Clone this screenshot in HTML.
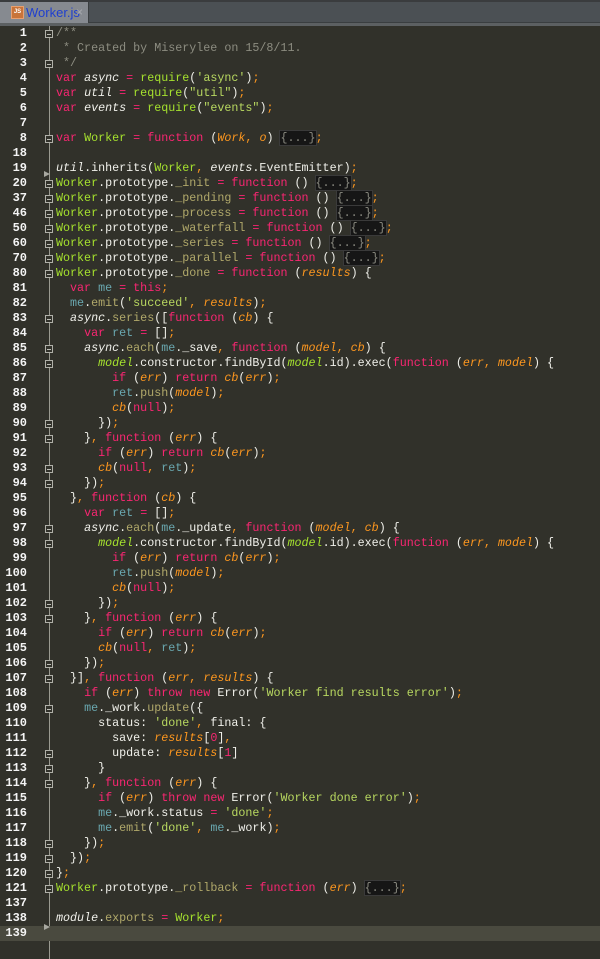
<!DOCTYPE html>
<html><head><meta charset="utf-8"><style>
html,body{margin:0;padding:0;width:600px;height:959px;overflow:hidden;background:#31312a;}
#bar{position:absolute;left:0;top:0;width:600px;height:26px;background:#4b5054;}
#bar .t1{position:absolute;left:0;top:0;width:600px;height:2px;background:#3a3c3e}
#bar .t2{position:absolute;left:0;top:22px;width:600px;height:1px;background:#3a3e40}
#bar .t3{position:absolute;left:0;top:23px;width:600px;height:3px;background:#5c6062}
#tab{position:absolute;left:0;top:2px;width:88px;height:21px;background:#868a90;border-right:1px solid #3a3e40}
#tab .ic{position:absolute;left:11px;top:4px;width:11px;height:11px;background:#c8743a;border:1px solid #e8a070;font:bold 6px "Liberation Sans",sans-serif;color:#fff;line-height:11px;text-align:center}
#tab .nm{position:absolute;left:26px;top:3px;font:13px "Liberation Sans",sans-serif;color:#1f3fcf}
#tab .x{position:absolute;left:76px;top:3px;font:12px "Liberation Sans",sans-serif;color:#a8aaae}
#code{position:absolute;left:0;top:26px;width:600px;}
.r{position:relative;height:15px;line-height:15px;font:11.7px/15px "Liberation Mono",monospace;color:#f0f0ea;white-space:pre;}
.n{position:absolute;left:0;width:27px;text-align:right;color:#f4f4f4;font-weight:bold;font-size:12px;}
.c0{position:absolute;left:56px;}
.cur{background:#4a4a3f;}
#vl{position:absolute;left:49px;top:26px;width:1px;height:933px;background:#9a9a90}
.fm{position:absolute;left:45px;width:8px;height:8px;border:1px solid #b0b0a8;background:#31312a;box-sizing:border-box;}
.fm:after{content:"";position:absolute;left:1px;top:2.5px;width:4px;height:1px;background:#c0c0b8}
.ar{position:absolute;left:44px;width:0;height:0;border-left:6px solid #a8a8a0;border-top:3px solid transparent;border-bottom:3px solid transparent}
.k{color:#f92672}.g{color:#a6e22e}.o{color:#fd971f}.oi{color:#fd971f;font-style:italic}
.t{color:#6aa8b0}.p{color:#b0a86a}.i{font-style:italic}.s{color:#b8d860}.c{color:#8c8c80}
.f{background:#161616;color:#8a8a80;outline:1px solid #3a3a3a}
</style></head><body>
<div id="bar"><div class="t1"></div><div class="t2"></div><div class="t3"></div>
<div id="tab"><div class="ic">JS</div><div class="nm">Worker.js</div><div class="x">×</div></div></div>
<div id="vl"></div>
<div id="code">
<div class="r"><span class="n">1</span><span class="c0 c">/**</span></div>
<div class="r"><span class="n">2</span><span class="c0 c"> * Created by Miserylee on 15/8/11.</span></div>
<div class="r"><span class="n">3</span><span class="c0 c"> */</span></div>
<div class="r"><span class="n">4</span><span class="c0"><span class="k">var</span> <span class="i">async</span> <span class="k">=</span> <span class="g">require</span>(<span class="s">'async'</span>)<span class="o">;</span></span></div>
<div class="r"><span class="n">5</span><span class="c0"><span class="k">var</span> <span class="i">util</span> <span class="k">=</span> <span class="g">require</span>(<span class="s">"util"</span>)<span class="o">;</span></span></div>
<div class="r"><span class="n">6</span><span class="c0"><span class="k">var</span> <span class="i">events</span> <span class="k">=</span> <span class="g">require</span>(<span class="s">"events"</span>)<span class="o">;</span></span></div>
<div class="r"><span class="n">7</span></div>
<div class="r"><span class="n">8</span><span class="c0"><span class="k">var</span> <span class="g">Worker</span> <span class="k">=</span> <span class="k">function</span> (<span class="oi">Work</span><span class="o">,</span> <span class="oi">o</span>) <span class="f">{...}</span><span class="o">;</span></span></div>
<div class="r"><span class="n">18</span></div>
<div class="r"><span class="n">19</span><span class="c0"><span class="i">util</span>.inherits(<span class="g">Worker</span><span class="o">,</span> <span class="i">events</span>.EventEmitter)<span class="o">;</span></span></div>
<div class="r"><span class="n">20</span><span class="c0"><span class="g">Worker</span>.prototype.<span class="p">_init</span> <span class="k">=</span> <span class="k">function</span> () <span class="f">{...}</span><span class="o">;</span></span></div>
<div class="r"><span class="n">37</span><span class="c0"><span class="g">Worker</span>.prototype.<span class="p">_pending</span> <span class="k">=</span> <span class="k">function</span> () <span class="f">{...}</span><span class="o">;</span></span></div>
<div class="r"><span class="n">46</span><span class="c0"><span class="g">Worker</span>.prototype.<span class="p">_process</span> <span class="k">=</span> <span class="k">function</span> () <span class="f">{...}</span><span class="o">;</span></span></div>
<div class="r"><span class="n">50</span><span class="c0"><span class="g">Worker</span>.prototype.<span class="p">_waterfall</span> <span class="k">=</span> <span class="k">function</span> () <span class="f">{...}</span><span class="o">;</span></span></div>
<div class="r"><span class="n">60</span><span class="c0"><span class="g">Worker</span>.prototype.<span class="p">_series</span> <span class="k">=</span> <span class="k">function</span> () <span class="f">{...}</span><span class="o">;</span></span></div>
<div class="r"><span class="n">70</span><span class="c0"><span class="g">Worker</span>.prototype.<span class="p">_parallel</span> <span class="k">=</span> <span class="k">function</span> () <span class="f">{...}</span><span class="o">;</span></span></div>
<div class="r"><span class="n">80</span><span class="c0"><span class="g">Worker</span>.prototype.<span class="p">_done</span> <span class="k">=</span> <span class="k">function</span> (<span class="oi">results</span>) {</span></div>
<div class="r"><span class="n">81</span><span class="c0">  <span class="k">var</span> <span class="t">me</span> <span class="k">=</span> <span class="k">this</span><span class="o">;</span></span></div>
<div class="r"><span class="n">82</span><span class="c0">  <span class="t">me</span>.<span class="p">emit</span>(<span class="s">'succeed'</span><span class="o">,</span> <span class="oi">results</span>)<span class="o">;</span></span></div>
<div class="r"><span class="n">83</span><span class="c0">  <span class="i">async</span>.<span class="p">series</span>([<span class="k">function</span> (<span class="oi">cb</span>) {</span></div>
<div class="r"><span class="n">84</span><span class="c0">    <span class="k">var</span> <span class="t">ret</span> <span class="k">=</span> []<span class="o">;</span></span></div>
<div class="r"><span class="n">85</span><span class="c0">    <span class="i">async</span>.<span class="p">each</span>(<span class="t">me</span>._save<span class="o">,</span> <span class="k">function</span> (<span class="oi">model</span><span class="o">,</span> <span class="oi">cb</span>) {</span></div>
<div class="r"><span class="n">86</span><span class="c0">      <span class="g i">model</span>.constructor.findById(<span class="g i">model</span>.id).exec(<span class="k">function</span> (<span class="oi">err</span><span class="o">,</span> <span class="oi">model</span>) {</span></div>
<div class="r"><span class="n">87</span><span class="c0">        <span class="k">if</span> (<span class="oi">err</span>) <span class="k">return</span> <span class="oi">cb</span>(<span class="oi">err</span>)<span class="o">;</span></span></div>
<div class="r"><span class="n">88</span><span class="c0">        <span class="t">ret</span>.<span class="p">push</span>(<span class="oi">model</span>)<span class="o">;</span></span></div>
<div class="r"><span class="n">89</span><span class="c0">        <span class="oi">cb</span>(<span class="k">null</span>)<span class="o">;</span></span></div>
<div class="r"><span class="n">90</span><span class="c0">      })<span class="o">;</span></span></div>
<div class="r"><span class="n">91</span><span class="c0">    }<span class="o">,</span> <span class="k">function</span> (<span class="oi">err</span>) {</span></div>
<div class="r"><span class="n">92</span><span class="c0">      <span class="k">if</span> (<span class="oi">err</span>) <span class="k">return</span> <span class="oi">cb</span>(<span class="oi">err</span>)<span class="o">;</span></span></div>
<div class="r"><span class="n">93</span><span class="c0">      <span class="oi">cb</span>(<span class="k">null</span><span class="o">,</span> <span class="t">ret</span>)<span class="o">;</span></span></div>
<div class="r"><span class="n">94</span><span class="c0">    })<span class="o">;</span></span></div>
<div class="r"><span class="n">95</span><span class="c0">  }<span class="o">,</span> <span class="k">function</span> (<span class="oi">cb</span>) {</span></div>
<div class="r"><span class="n">96</span><span class="c0">    <span class="k">var</span> <span class="t">ret</span> <span class="k">=</span> []<span class="o">;</span></span></div>
<div class="r"><span class="n">97</span><span class="c0">    <span class="i">async</span>.<span class="p">each</span>(<span class="t">me</span>._update<span class="o">,</span> <span class="k">function</span> (<span class="oi">model</span><span class="o">,</span> <span class="oi">cb</span>) {</span></div>
<div class="r"><span class="n">98</span><span class="c0">      <span class="g i">model</span>.constructor.findById(<span class="g i">model</span>.id).exec(<span class="k">function</span> (<span class="oi">err</span><span class="o">,</span> <span class="oi">model</span>) {</span></div>
<div class="r"><span class="n">99</span><span class="c0">        <span class="k">if</span> (<span class="oi">err</span>) <span class="k">return</span> <span class="oi">cb</span>(<span class="oi">err</span>)<span class="o">;</span></span></div>
<div class="r"><span class="n">100</span><span class="c0">        <span class="t">ret</span>.<span class="p">push</span>(<span class="oi">model</span>)<span class="o">;</span></span></div>
<div class="r"><span class="n">101</span><span class="c0">        <span class="oi">cb</span>(<span class="k">null</span>)<span class="o">;</span></span></div>
<div class="r"><span class="n">102</span><span class="c0">      })<span class="o">;</span></span></div>
<div class="r"><span class="n">103</span><span class="c0">    }<span class="o">,</span> <span class="k">function</span> (<span class="oi">err</span>) {</span></div>
<div class="r"><span class="n">104</span><span class="c0">      <span class="k">if</span> (<span class="oi">err</span>) <span class="k">return</span> <span class="oi">cb</span>(<span class="oi">err</span>)<span class="o">;</span></span></div>
<div class="r"><span class="n">105</span><span class="c0">      <span class="oi">cb</span>(<span class="k">null</span><span class="o">,</span> <span class="t">ret</span>)<span class="o">;</span></span></div>
<div class="r"><span class="n">106</span><span class="c0">    })<span class="o">;</span></span></div>
<div class="r"><span class="n">107</span><span class="c0">  }]<span class="o">,</span> <span class="k">function</span> (<span class="oi">err</span><span class="o">,</span> <span class="oi">results</span>) {</span></div>
<div class="r"><span class="n">108</span><span class="c0">    <span class="k">if</span> (<span class="oi">err</span>) <span class="k">throw new</span> Error(<span class="s">'Worker find results error'</span>)<span class="o">;</span></span></div>
<div class="r"><span class="n">109</span><span class="c0">    <span class="t">me</span>._work.<span class="p">update</span>({</span></div>
<div class="r"><span class="n">110</span><span class="c0">      status: <span class="s">'done'</span><span class="o">,</span> final: {</span></div>
<div class="r"><span class="n">111</span><span class="c0">        save: <span class="oi">results</span>[<span class="k">0</span>]<span class="o">,</span></span></div>
<div class="r"><span class="n">112</span><span class="c0">        update: <span class="oi">results</span>[<span class="k">1</span>]</span></div>
<div class="r"><span class="n">113</span><span class="c0">      }</span></div>
<div class="r"><span class="n">114</span><span class="c0">    }<span class="o">,</span> <span class="k">function</span> (<span class="oi">err</span>) {</span></div>
<div class="r"><span class="n">115</span><span class="c0">      <span class="k">if</span> (<span class="oi">err</span>) <span class="k">throw new</span> Error(<span class="s">'Worker done error'</span>)<span class="o">;</span></span></div>
<div class="r"><span class="n">116</span><span class="c0">      <span class="t">me</span>._work.status <span class="k">=</span> <span class="s">'done'</span><span class="o">;</span></span></div>
<div class="r"><span class="n">117</span><span class="c0">      <span class="t">me</span>.<span class="p">emit</span>(<span class="s">'done'</span><span class="o">,</span> <span class="t">me</span>._work)<span class="o">;</span></span></div>
<div class="r"><span class="n">118</span><span class="c0">    })<span class="o">;</span></span></div>
<div class="r"><span class="n">119</span><span class="c0">  })<span class="o">;</span></span></div>
<div class="r"><span class="n">120</span><span class="c0">}<span class="o">;</span></span></div>
<div class="r"><span class="n">121</span><span class="c0"><span class="g">Worker</span>.prototype.<span class="p">_rollback</span> <span class="k">=</span> <span class="k">function</span> (<span class="oi">err</span>) <span class="f">{...}</span><span class="o">;</span></span></div>
<div class="r"><span class="n">137</span></div>
<div class="r"><span class="n">138</span><span class="c0"><span class="i">module</span>.<span class="p">exports</span> <span class="k">=</span> <span class="g">Worker</span><span class="o">;</span></span></div>
<div class="r cur"><span class="n">139</span></div>
</div>
<div class="fm" style="top:30px"></div><div class="fm" style="top:60px"></div>
<div class="fm" style="top:135px"></div>
<div class="ar" style="top:171px"></div>
<div class="fm" style="top:180px"></div><div class="fm" style="top:195px"></div><div class="fm" style="top:210px"></div><div class="fm" style="top:225px"></div><div class="fm" style="top:240px"></div><div class="fm" style="top:255px"></div><div class="fm" style="top:270px"></div>
<div class="fm" style="top:315px"></div><div class="fm" style="top:345px"></div><div class="fm" style="top:360px"></div>
<div class="fm" style="top:420px"></div><div class="fm" style="top:435px"></div><div class="fm" style="top:465px"></div><div class="fm" style="top:480px"></div>
<div class="fm" style="top:525px"></div><div class="fm" style="top:540px"></div><div class="fm" style="top:600px"></div><div class="fm" style="top:615px"></div><div class="fm" style="top:660px"></div><div class="fm" style="top:675px"></div>
<div class="fm" style="top:705px"></div><div class="fm" style="top:750px"></div><div class="fm" style="top:765px"></div><div class="fm" style="top:780px"></div>
<div class="fm" style="top:840px"></div><div class="fm" style="top:855px"></div><div class="fm" style="top:870px"></div><div class="fm" style="top:885px"></div>
<div class="ar" style="top:924px"></div>
</body></html>
